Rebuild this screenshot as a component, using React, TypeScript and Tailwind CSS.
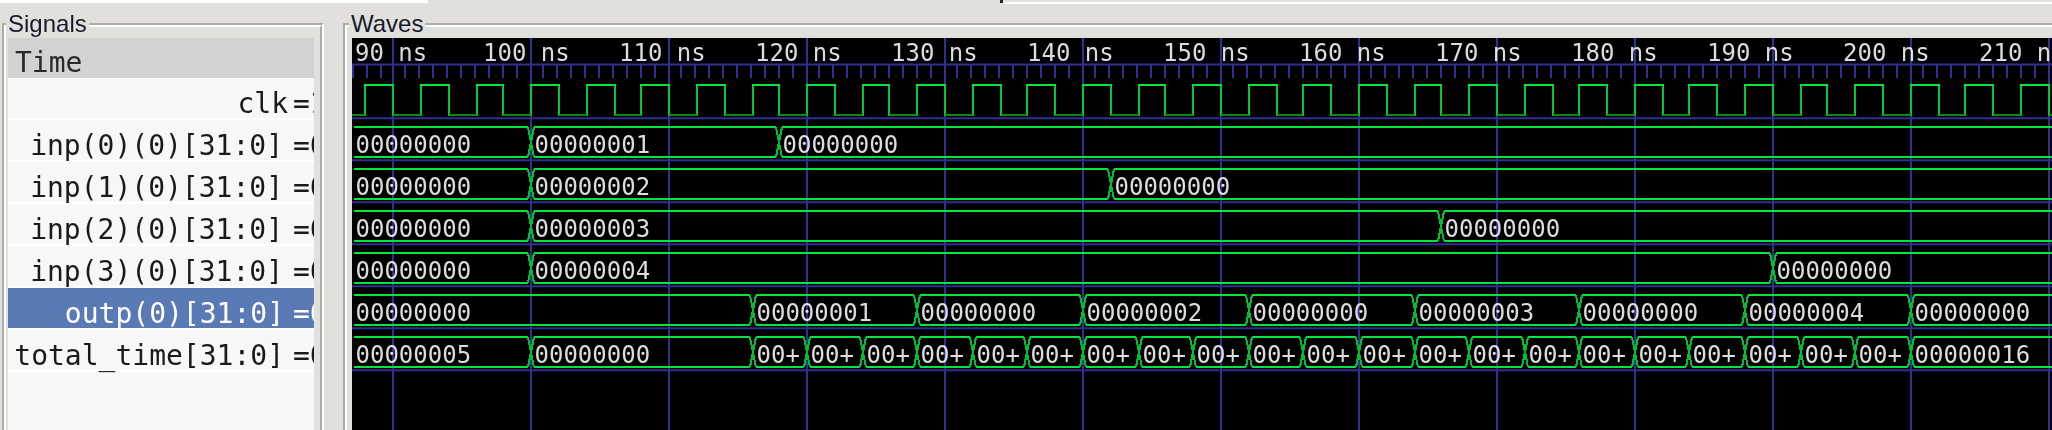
const MAJORS = [393, 531, 669, 807, 945, 1083, 1221, 1359, 1497, 1635, 1773, 1911, 2049];
const MINORS = [353, 367, 381, ...MAJORS.slice(0, 12).flatMap((m) => Array.from({ length: 9 }, (_, i) => m + 12 + i * 14))];

// clock edges as read off the trace: rise, fall, rise, ...
const CLOCK = [
  365, 393, 421, 449, 477, 503, 531, 559, 587, 615, 641, 669, 697, 725, 753, 779, 807, 835, 863, 889, 917, 945, 973,
  1001, 1027, 1055, 1083, 1111, 1139, 1165, 1193, 1221, 1249, 1277, 1303, 1331, 1359, 1387, 1415, 1441, 1469, 1497,
  1525, 1553, 1579, 1607, 1635, 1663, 1689, 1717, 1745, 1773, 1801, 1827, 1855, 1883, 1911, 1939, 1965, 1993, 2021, 2049,
];

type Seg = { t: number; v: string };

const short = (ts: number[]): Seg[] => ts.map((t) => ({ t, v: "00+" }));

const BUSES: Seg[][] = [
  [{ t: 351, v: "00000000" }, { t: 531, v: "00000001" }, { t: 779, v: "00000000" }],
  [{ t: 351, v: "00000000" }, { t: 531, v: "00000002" }, { t: 1111, v: "00000000" }],
  [{ t: 351, v: "00000000" }, { t: 531, v: "00000003" }, { t: 1441, v: "00000000" }],
  [{ t: 351, v: "00000000" }, { t: 531, v: "00000004" }, { t: 1773, v: "00000000" }],
  [
    { t: 351, v: "00000000" },
    { t: 753, v: "00000001" },
    { t: 917, v: "00000000" },
    { t: 1083, v: "00000002" },
    { t: 1249, v: "00000000" },
    { t: 1415, v: "00000003" },
    { t: 1579, v: "00000000" },
    { t: 1745, v: "00000004" },
    { t: 1911, v: "00000000" },
  ],
  [
    { t: 351, v: "00000005" },
    { t: 531, v: "00000000" },
    ...short([753, 807, 863, 917, 973, 1027, 1083, 1139, 1193, 1249, 1303, 1359, 1415, 1469, 1525, 1579, 1635, 1689, 1745, 1801, 1855]),
    { t: 1911, v: "00000016" },
  ],
];

const clockPath = () => {
  let d = "M352 115";
  CLOCK.forEach((x, i) => {
    d += ` L${x} ${i % 2 === 0 ? 115 : 85} L${x} ${i % 2 === 0 ? 85 : 115}`;
  });
  return d + " L2052 115";
};

function Waves() {
  return (
    <svg viewBox="352 38 1700 392" className="block w-[1700px] h-[392px] bg-black font-['DejaVu_Sans_Mono',monospace]">
      <g className="blur-[0.5px] fill-[#dcdcdc] text-[24px]">
        <text x={355} y={61}>
          90 ns
        </text>
        {Array.from({ length: 12 }, (_, i) => (
          <text key={i} x={483 + i * 136} y={61}>
            {100 + i * 10} ns
          </text>
        ))}
        {BUSES.flatMap((row, r) =>
          row.map((s) => (
            <text key={`${r}-${s.t}`} x={s.t === 351 ? 355.5 : s.t + 3.5} y={153 + r * 42}>
              {s.v}
            </text>
          ))
        )}
      </g>

      <g className="fill-[#2e3192] mix-blend-screen">
        {MAJORS.map((x) => (
          <rect key={x} x={x - 1} y={38} width={2} height={392} />
        ))}
      </g>
      <g className="fill-[#2e3192]">
        <rect x={352} y={63.5} width={1700} height={2} />
        {MINORS.map((x) => (
          <rect key={x} x={x - 1} y={65} width={2} height={13} />
        ))}
        {BUSES.concat([[]]).map((_, i) => (
          <rect key={i} x={352} y={117.3 + i * 42} width={1700} height={2} />
        ))}
      </g>

      <path d={clockPath()} fill="none" stroke="#00cc30" strokeWidth={2} />
      <g className="fill-[#00e63a]">
        {CLOCK.filter((_, i) => i % 2 === 0).map((x, i) => (
          <rect key={x} x={x - 1} y={84} width={(CLOCK[i * 2 + 1] ?? 2052) - x + 2} height={2} />
        ))}
      </g>
      <g className="fill-[#0a8a12]">
        <rect x={352} y={114} width={13} height={2} />
        {CLOCK.filter((_, i) => i % 2 === 1).map((x, i) => (
          <rect key={x} x={x} y={114} width={(CLOCK[i * 2 + 2] ?? 2052) - x} height={2} />
        ))}
      </g>

      {BUSES.map((row, r) => {
        const top = 126 + r * 42;
        return (
          <g key={r}>
            {row.map((s, i) => {
              const from = s.t === 351 ? 354 : s.t + 3;
              const to = row[i + 1] ? row[i + 1].t - 3 : 2052;
              return (
                <g key={s.t}>
                  <rect x={from} y={top} width={to - from} height={2} fill="#00e63a" />
                  <rect x={from} y={top + 30} width={to - from} height={2} fill="#00e63a" />
                  {s.t !== 351 && (
                    <g stroke="#00c030" strokeWidth={2} shapeRendering="crispEdges">
                      <line x1={s.t - 3} y1={top + 1} x2={s.t + 3} y2={top + 31} />
                      <line x1={s.t + 3} y1={top + 1} x2={s.t - 3} y2={top + 31} />
                    </g>
                  )}
                </g>
              );
            })}
          </g>
        );
      })}
    </svg>
  );
}

function Frame({ title, className, labelClass, children }: { title: string; className: string; labelClass: string; children: React.ReactNode }) {
  return (
    <div className={`relative border-t-2 border-l-2 border-r-2 border-t-[#aeaba2] border-l-[#aeaba2] border-r-white ${className}`}>
      <div className="h-full border-t-2 border-l-2 border-r-2 border-t-white border-l-white border-r-[#aeaba2]">{children}</div>
      <span className={`absolute -top-[15px] bg-[#e1e0dc] px-[2px] font-['Liberation_Sans',sans-serif] text-[24px] leading-[28px] text-[#161a2a] ${labelClass}`}>
        {title}
      </span>
    </div>
  );
}

const ROWS = [
  { name: "clk", value: "=1", pad: "pr-[5px]", sel: false },
  { name: "inp(0)(0)[31:0]", value: "=0", pad: "pr-[10px]", sel: false },
  { name: "inp(1)(0)[31:0]", value: "=0", pad: "pr-[10px]", sel: false },
  { name: "inp(2)(0)[31:0]", value: "=0", pad: "pr-[10px]", sel: false },
  { name: "inp(3)(0)[31:0]", value: "=0", pad: "pr-[10px]", sel: false },
  { name: "outp(0)[31:0]", value: "=0", pad: "pr-[9px]", sel: true },
  { name: "total_time[31:0]", value: "=0", pad: "pr-[9px]", sel: false },
];

export default function App() {
  return (
    <div className="relative flex w-[2052px] h-[430px] overflow-hidden bg-[#e1e0dc] pt-[23px] pl-[2px]">
      <div className="absolute left-0 top-0 h-[3px] w-[428px] bg-white" />
      <div className="absolute left-[1003px] top-[2px] h-[2px] right-0 bg-white" />
      <div className="absolute left-[1000px] top-0 h-[3px] w-[3px] bg-[#222]" />

      <Frame title="Signals" labelClass="left-[2px]" className="w-[322px] h-[407px] flex-none">
        <div className="h-full pt-[11px] pl-[2px] pr-[6px]">
          <div className="h-full overflow-hidden bg-[#f7f7f7] font-['DejaVu_Sans_Mono',monospace] text-[28px] leading-none text-[#1a1a1a]">
            <div className="flex h-[40px] items-center bg-[#d2d2d2] pl-[7px] pt-[10px] text-[#2a2a2a]">
              <span className="blur-[0.3px]">Time</span>
            </div>
            {ROWS.map((row) => (
              <div
                key={row.name}
                className={`flex h-[42px] items-center whitespace-nowrap border-b-2 border-white pt-[12px] ${row.sel ? "bg-[#5a7ab5] text-white" : ""}`}
              >
                <span className={`w-[285px] flex-none text-right blur-[0.3px] ${row.pad}`}>{row.name}</span>
                <span className="blur-[0.3px]">{row.value}</span>
              </div>
            ))}
          </div>
        </div>
      </Frame>

      <Frame title="Waves" labelClass="left-[4px]" className="ml-[19px] flex-1 h-[407px] border-r-0">
        <div className="pt-[11px] pl-[5px]">
          <Waves />
        </div>
      </Frame>
    </div>
  );
}
